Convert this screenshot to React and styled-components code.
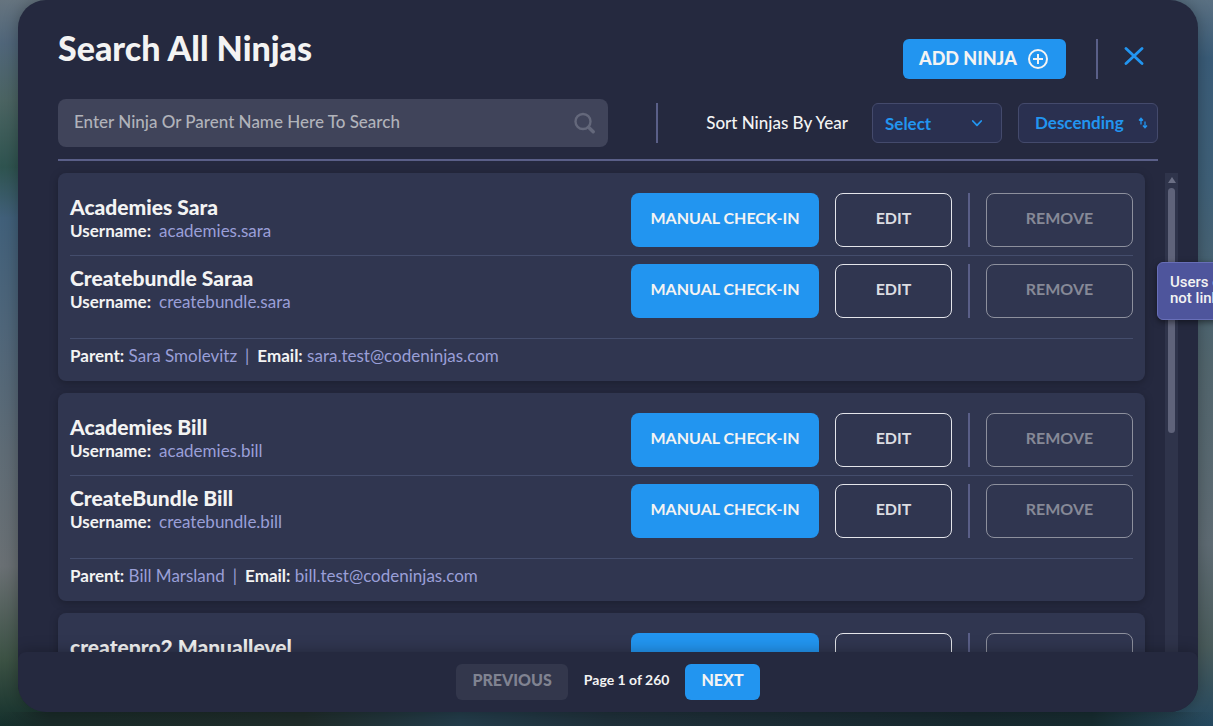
import { useState } from "react"
import styled, { createGlobalStyle, css } from "styled-components"

const groups = [
    {
        parent: "Sara Smolevitz",
        email: "sara.test@codeninjas.com",
        ninjas: [
            { name: "Academies Sara", username: "academies.sara" },
            { name: "Createbundle Saraa", username: "createbundle.sara" },
        ],
    },
    {
        parent: "Bill Marsland",
        email: "bill.test@codeninjas.com",
        ninjas: [
            { name: "Academies Bill", username: "academies.bill" },
            { name: "CreateBundle Bill", username: "createbundle.bill" },
        ],
    },
    {
        ninjas: [{ name: "createpro2 Manuallevel", username: "" }],
    },
]

function NinjaRow({ name, username }) {
    return (
        <Row>
            <Info>
                <Name>{name}</Name>
                {username && (
                    <Detail>
                        <b>Username:</b>
                        <span>{username}</span>
                    </Detail>
                )}
            </Info>
            <Actions>
                <CheckInButton type="button">MANUAL CHECK-IN</CheckInButton>
                <EditButton type="button">EDIT</EditButton>
                <Divider $tall />
                <RemoveButton type="button" disabled>REMOVE</RemoveButton>
            </Actions>
        </Row>
    )
}

function NinjaCard({ parent, email, ninjas }) {
    return (
        <Card>
            {ninjas.map((n) => (
                <NinjaRow key={n.name} {...n} />
            ))}
            {parent && (
                <ParentLine>
                    <b>Parent:</b> {parent}
                    <Pipe>|</Pipe>
                    <b>Email:</b> {email}
                </ParentLine>
            )}
        </Card>
    )
}

export default function App() {
    const [search, setSearch] = useState("")

    return (
        <Page>
            <GlobalStyle />
            <Panel>
                <Header>
                    <Title>Search All Ninjas</Title>
                    <HeaderActions>
                        <AddButton type="button">
                            <span>ADD NINJA</span>
                            <svg width="20" height="20" viewBox="0 0 20 20" fill="none" stroke="currentColor" strokeWidth="2">
                                <circle cx="10" cy="10" r="9" />
                                <path d="M10 5v10M5 10h10" />
                            </svg>
                        </AddButton>
                        <Divider />
                        <CloseButton type="button" aria-label="Close">
                            <svg width="20" height="18" viewBox="0 0 20 18" fill="none" stroke="currentColor" strokeWidth="2.8" strokeLinecap="round">
                                <path d="M2 1.5L18 16.5M18 1.5L2 16.5" />
                            </svg>
                        </CloseButton>
                    </HeaderActions>
                </Header>
                <Filters>
                    <SearchBox>
                        <SearchInput
                            aria-label="Search ninjas"
                            placeholder="Enter Ninja Or Parent Name Here To Search"
                            value={search}
                            onChange={(e) => setSearch(e.target.value)}
                        />
                        <svg width="22" height="22" viewBox="0 0 22 22" fill="none" stroke="currentColor">
                            <circle cx="9" cy="9.5" r="7.5" strokeWidth="2.4" />
                            <path d="M14.6 15.2L19.2 19.8" strokeWidth="3.4" strokeLinecap="round" />
                        </svg>
                    </SearchBox>
                    <Divider />
                    <SortArea>
                        <SortLabel htmlFor="year">Sort Ninjas By Year</SortLabel>
                        <SelectBox>
                            <YearSelect id="year">
                                <option>Select</option>
                            </YearSelect>
                            <svg width="12" height="8" viewBox="0 0 12 8" fill="none" stroke="currentColor" strokeWidth="1.8" strokeLinecap="round" strokeLinejoin="round">
                                <path d="M1.8 2L6 6.4L10.2 2" />
                            </svg>
                        </SelectBox>
                        <OrderButton type="button">
                            <span>Descending</span>
                            <svg width="10" height="12" viewBox="0 0 10 12" fill="none" stroke="currentColor" strokeWidth="1.3">
                                <path d="M3 7.5V1.5M1 3.5L3 1.3L5 3.5M7 4.5V10.5M5 8.5L7 10.7L9 8.5" />
                            </svg>
                        </OrderButton>
                    </SortArea>
                </Filters>
                <Content>
                    <List>
                        {groups.map((g, i) => (
                            <NinjaCard key={i} {...g} />
                        ))}
                    </List>
                    <Scrollbar aria-hidden="true">
                        <ScrollArrow />
                        <ScrollThumb />
                    </Scrollbar>
                </Content>
                <Footer>
                    <PageButton type="button" disabled>PREVIOUS</PageButton>
                    <PageCount>Page 1 of 260</PageCount>
                    <PageButton type="button">NEXT</PageButton>
                </Footer>
            </Panel>
            <Tooltip role="tooltip">
                Users on this list are
                <br />
                not linked
            </Tooltip>
        </Page>
    )
}

const GlobalStyle = createGlobalStyle`
    * {
        box-sizing: border-box;
    }
    body {
        margin: 0;
        font-family: Lato, "Open Sans", sans-serif;
        color: #f3f3f3;
    }
    button, input, select {
        font-family: inherit;
    }
    svg {
        flex: none;
    }
`
const Page = styled.div`
    position: relative;
    display: flex;
    height: 100vh;
    padding: 0 15px 14px 18px;
    overflow: hidden;

    background:
        linear-gradient(90deg, transparent, #1a2b29 4%, #1f2c2a 25%, #233c4a 38%, #1f303a 50%, #18292f 80%, #172c30 90%, transparent) bottom / 100% 14px no-repeat,
        linear-gradient(#66747f, #50667a 6%, #4b6462 14%, #2f5450 23%, #41607a 30%, #4f667a 45%, #5f6c76 62%, #6a7074 78%, #3c5244 91%, #14302c) left / 50% 100% no-repeat,
        linear-gradient(#5a7082, #3a5c78 8%, #3f6078 25%, #52666e 50%, #5f6c74 75%, #4a5c5c 89%, #24485f) right / 50% 100% no-repeat;
`
const Panel = styled.main`
    display: flex;
    flex-direction: column;
    flex: 1;
    min-width: 0;

    background-color: #25293f;
    border-radius: 28px;
    box-shadow: 0 0 16px rgba(0, 0, 0, 0.3);
    overflow: hidden;
`
const Header = styled.header`
    display: flex;
    justify-content: space-between;
    height: 99px;
    padding: 0 40px;
`
const Title = styled.h1`
    margin: 28px 0 0;

    font-size: 34px;
    font-weight: 900;
    line-height: 40px;
`
const HeaderActions = styled.div`
    display: flex;
    align-items: center;
    height: 40px;
    margin-top: 39px;
    padding-right: 14px;
`
const Divider = styled.span`
    flex: none;
    width: 2px;
    height: ${(p) => (p.$tall ? "54px" : "40px")};

    background-color: #5a5f88;
`
const blue = css`
    background-color: #2295f0;
    border: none;
    color: #f3f3f3;
`
const AddButton = styled.button`
    ${blue}
    display: flex;
    align-items: center;
    justify-content: space-between;
    width: 163px;
    height: 40px;
    margin-right: 30px;
    padding: 0 18px 0 16px;

    border-radius: 6px;
    font-size: 18px;
    font-weight: 900;

    span {
        padding-bottom: 2px;
    }
`
const CloseButton = styled.button`
    display: flex;
    margin-left: 26px;
    margin-bottom: 6px;
    padding: 0;

    background: none;
    border: none;
    color: #2295f0;
`
const Filters = styled.div`
    display: flex;
    align-items: center;
    height: 62px;
    margin: 0 40px;
    padding-bottom: 12px;

    border-bottom: 2px solid #5a5f88;
`
const SearchBox = styled.div`
    display: flex;
    align-items: center;
    flex: 0 1 550px;
    height: 48px;
    margin-right: 48px;
    padding: 0 12px 0 16px;

    background-color: #40445a;
    border-radius: 8px;
    color: #64687b;
`
const SearchInput = styled.input`
    flex: 1;
    min-width: 0;
    height: 44px;
    padding: 0 0 4px;

    background: none;
    border: none;
    outline: none;
    font-size: 17px;
    font-weight: 500;
    color: #f3f3f3;

    &::placeholder {
        color: #b1b3ba;
        opacity: 1;
    }
`
const SortArea = styled.div`
    display: flex;
    align-items: center;
    flex: 1;
    justify-content: flex-end;
    gap: 16px;
`
const SortLabel = styled.label`
    margin-right: 8px;
    padding-bottom: 2px;

    font-size: 17px;
    font-weight: 500;
    white-space: nowrap;
`
const sortControl = css`
    height: 40px;

    background-color: #2a3050;
    border: 1px solid #444a6c;
    border-radius: 6px;
    font-size: 17px;
    font-weight: 700;
    color: #2295f0;
`
const SelectBox = styled.div`
    ${sortControl}
    display: flex;
    align-items: center;
    width: 130px;
    padding-right: 18px;
`
const YearSelect = styled.select`
    flex: 1;
    min-width: 0;
    height: 36px;
    padding: 0 0 0 12px;

    appearance: none;
    background: none;
    border: none;
    font-size: 17px;
    font-weight: 700;
    color: inherit;
`
const OrderButton = styled.button`
    ${sortControl}
    display: flex;
    align-items: center;
    justify-content: space-between;
    width: 140px;
    padding: 0 9px 0 16px;

    span {
        padding-bottom: 2px;
    }
`
const Content = styled.div`
    display: flex;
    justify-content: space-between;
    flex: 1;
    min-height: 0;
    padding: 12px 20px 0 40px;
`
const List = styled.div`
    display: flex;
    flex-direction: column;
    gap: 12px;
    flex: 1;
    margin-right: 20px;
`
const Card = styled.section`
    flex: none;
    padding: 12px;

    background-color: #303650;
    border-radius: 8px;
    box-shadow: 0 2px 8px rgba(0, 0, 0, 0.25);
`
const Row = styled.div`
    display: flex;
    justify-content: space-between;
    height: 70px;
    padding-top: 8px;

    & + & {
        border-top: 1px solid #444d6c;
    }
`
const Info = styled.div`
    padding-top: 2px;
`
const Name = styled.h2`
    margin: 0;

    font-size: 21px;
    font-weight: 900;
    line-height: 24px;
`
const Detail = styled.p`
    display: flex;
    gap: 8px;
    margin: 0;

    font-size: 17px;
    line-height: 24px;

    span {
        color: #9a9fd8;
    }
`
const Actions = styled.div`
    display: flex;
    gap: 16px;
`
const RowButton = styled.button`
    height: 54px;
    padding: 0 0 5px;

    background: none;
    border: 1px solid #e4e5ea;
    border-radius: 8px;
    font-size: 16px;
    font-weight: 700;
    color: #dcdde2;
`
const CheckInButton = styled(RowButton)`
    ${blue}
    width: 188px;
`
const EditButton = styled(RowButton)`
    width: 117px;
`
const RemoveButton = styled(RowButton)`
    width: 147px;

    border-color: #8d909d;
    color: #868997;
`
const ParentLine = styled.p`
    margin: 13px 0 0;
    padding: 6px 0 2px;

    border-top: 1px solid #444d6c;
    font-size: 17px;
    line-height: 22px;
    color: #9a9fd8;

    b {
        color: #f3f3f3;
    }
`
const Pipe = styled.span`
    margin: 0 8px;
`
const Scrollbar = styled.div`
    display: flex;
    flex-direction: column;
    align-items: center;
    width: 13px;

    background-color: #2f344b;
`
const ScrollArrow = styled.div`
    margin-top: 4px;

    border: 4px solid transparent;
    border-top: none;
    border-bottom: 6px solid #6b6f85;
`
const ScrollThumb = styled.div`
    width: 7px;
    height: 245px;
    margin-top: 5px;

    background-color: #5f637a;
    border-radius: 4px;
`
const Footer = styled.footer`
    position: relative;
    display: flex;
    justify-content: center;
    gap: 16px;
    height: 60px;
    padding-top: 12px;

    background-color: #25293f;
    border-radius: 8px 8px 0 0;
    box-shadow: 0 0 16px rgba(0, 0, 0, 0.3);
`
const PageButton = styled.button`
    ${blue}
    height: 36px;
    padding: 0 16px 5px;

    border-radius: 6px;
    font-size: 16px;
    font-weight: 900;

    &:disabled {
        background-color: #33374c;
        color: #808391;
    }
`
const PageCount = styled.span`
    font-size: 14px;
    font-weight: 700;
    line-height: 32px;
`
const Tooltip = styled.div`
    position: absolute;
    top: 262px;
    left: calc(100% - 56px);
    height: 58px;
    padding: 11px 12px;

    background-color: #4e559c;
    border: 1px solid #686fb8;
    border-radius: 6px;
    box-shadow: 0 2px 6px rgba(0, 0, 0, 0.5);
    font-family: Roboto, sans-serif;
    font-size: 15px;
    font-weight: 500;
    line-height: 16px;
    white-space: nowrap;
`
